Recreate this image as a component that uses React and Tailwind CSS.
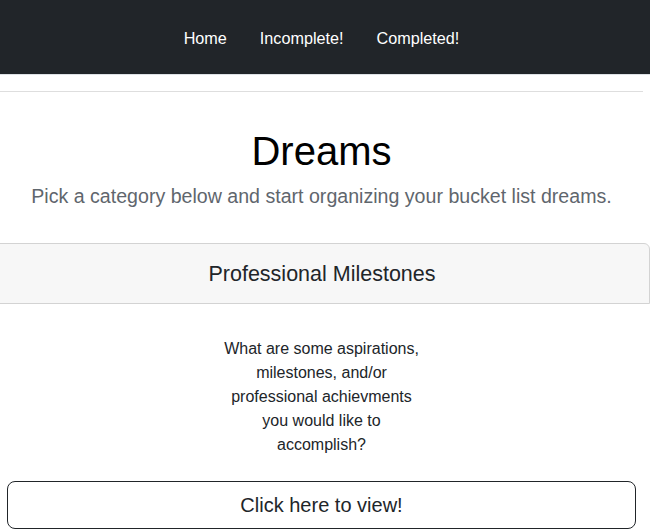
import React from "react";

const navLinks = ["Home", "Incomplete!", "Completed!"];

const App = () => {
    return (
        <div className="min-h-screen bg-white font-['Liberation_Sans',Arial,sans-serif] text-[#212529] overflow-hidden">
            {/* Top navbar */}
            <nav className="h-[75px] bg-[#212529] border-b border-[#dee2e6]">
                <div className="w-[643px] h-full flex justify-center items-center">
                    <ul className="flex gap-[33px] mt-[2px]">
                        {navLinks.map((link) => (
                            <li key={link} className="text-white text-[16.2px] leading-6">
                                {link}
                            </li>
                        ))}
                    </ul>
                </div>
            </nav>

            <div className="w-[643px]">
                <hr className="mt-[16px] border-t border-[#dedede]" />

                <div className="text-center pt-[35px]">
                    <h1 className="text-[40px] leading-[48px] font-normal text-black">Dreams</h1>
                    <p className="mt-[6px] text-[19.6px] leading-[30px] text-[#5f666d]">
                        Pick a category below and start organizing your bucket list dreams.
                    </p>
                </div>

                {/* Category card */}
                <div className="mt-[32px] -ml-[7px] w-[657px]">
                    <div className="h-[61px] bg-[#f7f7f7] border border-[#d3d3d3] rounded-t-[6px] flex items-center justify-center pl-[1px]">
                        <h2 className="text-[21.5px] leading-[30px] text-[#212529]">Professional Milestones</h2>
                    </div>
                    <div className="pt-[33px] px-[14px] text-center">
                        <p className="w-[200px] mx-auto text-[16px] leading-6 text-[#212529]">
                            What are some aspirations, milestones, and/or professional achievments you would like to accomplish?
                        </p>
                        <button className="mt-[24px] w-full h-[48px] border border-[#212529] rounded-[8px] text-[20px] text-[#212529] bg-white">
                            Click here to view!
                        </button>
                    </div>
                </div>
            </div>
        </div>
    );
};

export default App;
